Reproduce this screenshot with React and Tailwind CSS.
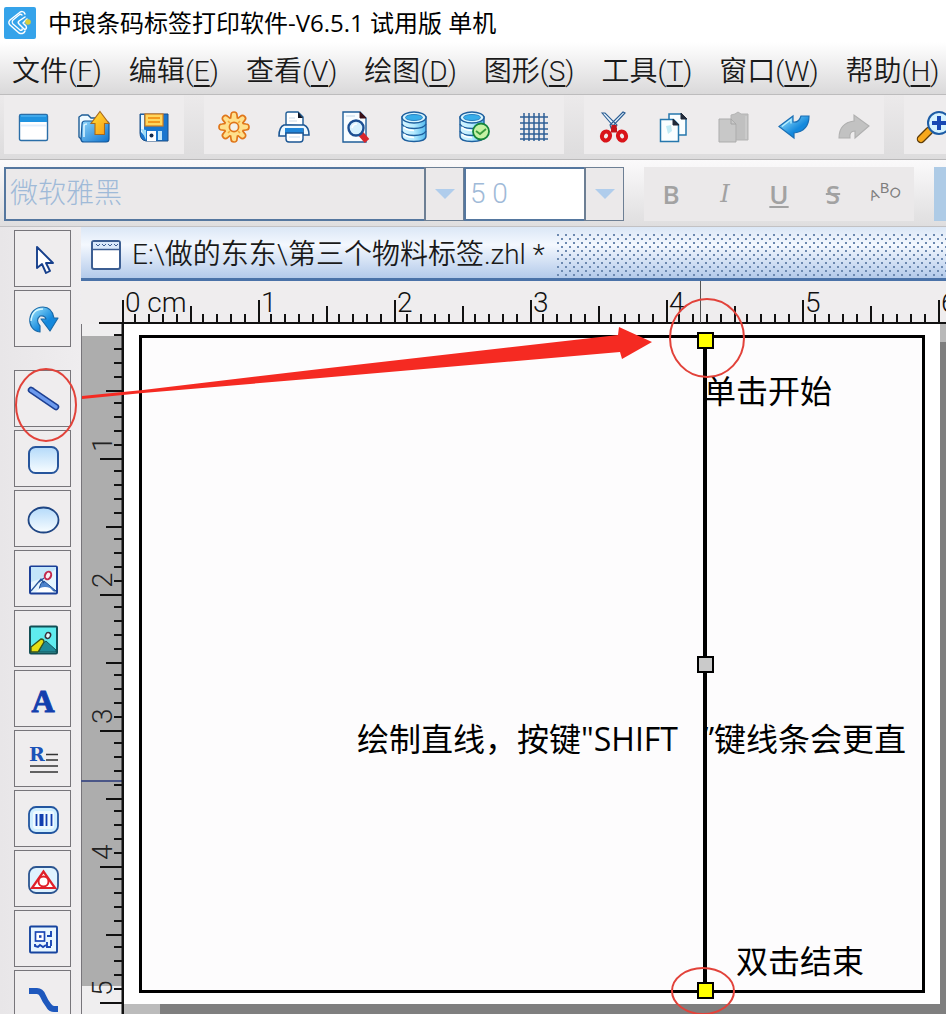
import React from "react";

const LATIN_CJK = "font-['Open_Sans','Noto_Sans_CJK_SC',sans-serif]";
const THIN_CJK = "font-['Roboto','Noto_Sans_CJK_SC',sans-serif]";

function Icon({ children, className = "size-8" }) {
  return (
    <svg viewBox="0 0 32 32" className={className + " shrink-0 overflow-visible"} fill="none" aria-hidden="true">
      {children}
    </svg>
  );
}

function Gradients() {
  return (
    <svg className="absolute size-0" aria-hidden="true">
      <defs>
        <linearGradient id="folder" x1="0" y1="0" x2="1" y2="1">
          <stop offset="0" stopColor="#8fd6fb" />
          <stop offset="1" stopColor="#0f72cc" />
        </linearGradient>
        <linearGradient id="gold" x1="0" y1="0" x2="1" y2="1">
          <stop offset="0" stopColor="#ffe03a" />
          <stop offset="1" stopColor="#fb9a12" />
        </linearGradient>
        <linearGradient id="sky" x1="0" y1="0" x2="0" y2="1">
          <stop offset="0" stopColor="#b4dafa" />
          <stop offset="1" stopColor="#f8fdff" />
        </linearGradient>
        <linearGradient id="drum" x1="0" y1="0" x2="1" y2="0">
          <stop offset="0" stopColor="#d8f6ff" />
          <stop offset="0.5" stopColor="#b6ebff" />
          <stop offset="1" stopColor="#4fb8ee" />
        </linearGradient>
        <linearGradient id="turn" x1="0" y1="0" x2="1" y2="1">
          <stop offset="0" stopColor="#a8ecff" />
          <stop offset="0.6" stopColor="#1489dd" />
        </linearGradient>
      </defs>
    </svg>
  );
}

const Logo = () => (
  <Icon>
    <rect width="32" height="32" rx="2" fill="#35a3ea" />
    <g stroke="#fff" strokeLinecap="round" strokeLinejoin="round">
      <path d="M21 7c-1-3-4-3-6-1L6 13c-2 2-1 4 0 5l9 8c2 1 5 1 6-2" strokeWidth="1.500" />
      <path d="M18 8c-1-1-2-1-3 0l-6 5c-1 1-1 3 0 4l7 6c1 1 3 0 2-1" strokeWidth="1.300" />
      <path d="M21 10l-6 4c-1 1-1 2 0 3l5 5c2 1 3-1 2-3l-3-3 4-4" strokeWidth="1.500" />
    </g>
    <circle cx="24" cy="15" r="2.800" fill="#d9cf3c" />
  </Icon>
);

const NewIcon = () => (
  <Icon>
    <rect x="1.5" y="3.5" width="28" height="26" rx="1.5" fill="#fff" stroke="#2a6ea8" strokeWidth="1.4" />
    <rect x="2" y="4" width="27" height="7" fill="#1f93e0" />
    <path d="M3 5h25" stroke="#58b8f0" strokeWidth="1.2" />
    <path d="M3 14.5h25" stroke="#e2eefc" strokeWidth="2" />
  </Icon>
);
const OpenIcon = () => (
  <Icon>
    <path d="M1 26V6l3-2h6l3 3h10v16H6l-2 6z" fill="#effaff" stroke="#1d5c96" strokeWidth="1.4" />
    <path d="M4 13q0-3 3-3h20q4 0 4 3v15q0 3-3 3H6q-3 0-3-3z" fill="url(#folder)" stroke="#14589c" strokeWidth="1.2" />
    <path d="M6 26V15q0-2 3-2" stroke="#d8f3ff" strokeWidth="1.6" />
    <path d="M22 .5l9 12h-4.500v11H17v-11h-4z" fill="url(#gold)" stroke="#a8691d" strokeWidth="1.1" />
  </Icon>
);
const SaveIcon = () => (
  <Icon>
    <path d="M2 3h28v27H8q-6-1-6-8z" fill="#1976cf" stroke="#1c4f86" />
    <path d="M3 4h3v20l-3-3z" fill="#e8f6ff" />
    <rect x="7" y="3" width="18" height="12" fill="#ffd75e" stroke="#d27a1c" strokeWidth="1.2" />
    <path d="M10 7h12M10 11h12" stroke="#f49a1c" strokeWidth="1.8" />
    <path d="M3 18l5 11V19z" fill="#9ddcf8" />
    <path d="M9 20h9v10H9z" fill="#fff" />
    <path d="M20 20h4v9h-4z" fill="#bfe6fb" />
    <circle cx="13.500" cy="24.500" r="2" fill="#10294d" />
  </Icon>
);
const GearIcon = () => (
  <Icon>
    <g fill="#ffe08c" stroke="#e0761a" strokeWidth="1.7">
      {[0, 45, 90, 135, 180, 225, 270, 315].map((a) => (
        <path key={a} d="M12.500 8l.5-4q0-3 3-3t3 3l.5 4" transform={`rotate(${a} 16 16)`} />
      ))}
      <circle cx="16" cy="16" r="9" stroke="none" />
      <circle cx="16" cy="16" r="4.600" fill="#f3f0ea" />
      <path d="M10 10l2 2M22 10l-2 2M10 22l2-2M22 22l-2-2" stroke="#f5a93c" />
    </g>
  </Icon>
);
const PrintIcon = () => (
  <Icon>
    <path d="M8 14V3q0-2 2-2h10l5 5v9z" fill="#fff" stroke="#1d5c96" strokeWidth="1.4" />
    <path d="M20 1v6h5z" fill="#111827" />
    <path d="M11 7h6M11 10h8" stroke="#cddbe8" />
    <path d="M6 14h20q5 2 5 10h-6V18H8v7H1q0-9 5-11z" fill="#eef9ff" stroke="#1b5694" strokeWidth="1.6" />
    <rect x="7" y="17" width="18" height="6" fill="#1f86da" />
    <path d="M8 22h17v6q0 3-3 3H11q-3 0-3-3z" fill="#fff" stroke="#1b5694" strokeWidth="1.4" />
    <path d="M11 26h11" stroke="#d7e7f4" strokeWidth="1.4" />
  </Icon>
);
const PreviewIcon = () => (
  <Icon>
    <path d="M5 1h17l6 6v24H5z" fill="#f8fdff" stroke="#1f5d99" strokeWidth="1.4" />
    <path d="M22 1v6h6z" fill="#3a1018" stroke="#3a1018" />
    <path d="M8 5h9" stroke="#c9dcec" strokeWidth="1.2" />
    <path d="M23 23l6 7" stroke="#d8262c" strokeWidth="6" />
    <circle cx="18" cy="17" r="7.500" fill="#d7f2ff" stroke="#1c4f93" strokeWidth="2.400" />
    <path d="M14 17q1-4 5-4" stroke="#fff" strokeWidth="1.600" />
  </Icon>
);
const Drum = () => (
  <g stroke="#1e5f9e" strokeWidth="1.400">
    <path d="M4 6v19q0 5.500 12 5.500T28 25V6z" fill="url(#drum)" />
    <ellipse cx="16" cy="6.500" rx="12" ry="5.500" fill="#d9f6ff" />
    <ellipse cx="16" cy="6.500" rx="8.500" ry="3" fill="#38aeea" stroke="#2a83c4" strokeWidth="1" />
    <path d="M4 13q2 4.500 12 4.500T28 13M4 20q2 4.500 12 4.500T28 20" />
    <path d="M6 16q3 3.500 10 3.500M6 23q3 3.500 10 3.500" stroke="#fff" strokeWidth="1.600" />
  </g>
);
const DbIcon = () => (
  <Icon>
    <Drum />
  </Icon>
);
const DbCheckIcon = () => (
  <Icon>
    <g transform="translate(-2)">
      <Drum />
    </g>
    <circle cx="23" cy="20.500" r="8" fill="#c6f2a4" stroke="#15853b" strokeWidth="1.800" />
    <path d="M18 20l4 3 6-5" stroke="#3a9b3e" strokeWidth="1.800" />
  </Icon>
);
const GridIcon = () => (
  <Icon>
    <path d="M6 2v28M11 2v28M16 2v28M21 2v28M26 2v28M2 6h28M2 12h28M2 18h28M2 23h28M2 28h28" stroke="#2f5f96" strokeWidth="1.500" />
  </Icon>
);
const CutIcon = () => (
  <Icon>
    <path d="M4 2l13 15 2-3L7 2zM27 2L13 17l-1-3L25 1z" fill="#eaf6ff" stroke="#2a5d93" strokeWidth="1.100" />
    <path d="M16 14v5M13 19h6" stroke="#c3141a" strokeWidth="5" />
    <ellipse cx="8" cy="25" rx="4" ry="4.500" transform="rotate(25 8 25)" stroke="#d9141a" strokeWidth="4" />
    <ellipse cx="24" cy="25" rx="4" ry="4.500" transform="rotate(-25 24 25)" stroke="#d9141a" strokeWidth="4" />
  </Icon>
);
const CopyIcon = () => (
  <Icon>
    <g stroke="#2677ad" strokeWidth="1.500" fill="#fafeff">
      <path d="M11 3h12l5 5v16H11z" />
      <path d="M23 2v6h6z" fill="#222b3a" stroke="#222b3a" strokeWidth="1" />
      <path d="M2.500 8.500h13l5 5v17h-18z" />
      <path d="M15 8v6h6z" fill="#222b3a" stroke="#222b3a" strokeWidth="1" />
    </g>
    <path d="M8 15l5-1 1 6-4 3z" fill="#c3ebf5" />
  </Icon>
);
const PasteIcon = () => (
  <Icon>
    <path d="M13 4l4-1 3-2 3 2h7v26H13z" fill="#c0c0c0" stroke="#b4b4b4" />
    <path d="M1 8h12l5 5v18H1z" fill="#c8c8c8" stroke="#adadad" />
    <path d="M13 8v5h5" stroke="#a4a4a4" />
    <path d="M28 5v23" stroke="#d5d5d5" />
  </Icon>
);
const UndoIcon = () => (
  <Icon>
    <path d="M1 15.500L15 5v6q6 1 8-6h8q0 15-15 17v5z" fill="url(#turn)" stroke="#1a6fb5" strokeWidth="1.200" />
    <path d="M4 15.500l9-7v4" stroke="#b9f0ff" strokeWidth="1.300" />
  </Icon>
);
const RedoIcon = () => (
  <Icon>
    <path d="M31 15L16 4v6Q1 12 1 27h11q-1-7 5-7v7z" fill="#c2c2c2" stroke="#b0b0b0" strokeWidth="1.100" />
  </Icon>
);
const ZoomIcon = () => (
  <Icon>
    <path d="M3 28l8-8" stroke="#5b3a08" strokeWidth="8.500" strokeLinecap="round" />
    <path d="M3 28l8-8" stroke="#f7a81c" strokeWidth="6" strokeLinecap="round" />
    <circle cx="21" cy="12" r="11" fill="#d5f2ff" stroke="#1c5ca6" strokeWidth="2" />
    <path d="M21 5v14M14 12h14" stroke="#1748b4" strokeWidth="4" />
  </Icon>
);

const CursorIcon = () => (
  <Icon>
    <path d="M10 3v21l5-4 4 9 4-2-4-8h7z" fill="#fff" stroke="#17408c" strokeWidth="1.900" strokeLinejoin="round" />
  </Icon>
);
const RotateIcon = () => (
  <Icon>
    <path d="M13 28C-2 26 0 3 16 3q9 0 11 11h4l-8 13-9-12h5q-1-4-6-3-5 4 0 10z" fill="url(#turn)" stroke="#1b6aa8" strokeWidth="1.200" strokeLinejoin="round" />
    <path d="M4 17Q5 5 16 5" stroke="#d6f8ff" strokeWidth="1.400" />
  </Icon>
);
const LineIcon = () => (
  <Icon>
    <path d="M4 6l25 17" stroke="#1c3f92" strokeWidth="6.500" strokeLinecap="round" />
    <path d="M4 6l25 17" stroke="#6c9aee" strokeWidth="3.400" strokeLinecap="round" />
  </Icon>
);
const RoundRectIcon = () => (
  <Icon>
    <rect x="2" y="3" width="29" height="26" rx="6.500" fill="url(#sky)" stroke="#26559c" strokeWidth="2" />
  </Icon>
);
const EllipseIcon = () => (
  <Icon>
    <ellipse cx="16.500" cy="16" rx="15" ry="12.500" fill="url(#sky)" stroke="#1f4684" strokeWidth="1.800" />
  </Icon>
);
const PictureIcon = () => (
  <Icon>
    <rect x="3" y="2.500" width="27" height="27" rx="1" fill="#e6f6ff" stroke="#1b3f97" strokeWidth="2" />
    <path d="M4 18Q16 15 29 5V3H4z" fill="#c4e6fa" />
    <path d="M12 27q1-9 5-10l12 10z" fill="#4d83cc" stroke="#1d4c95" />
    <path d="M13 24q5-2 10 0l4 4H9z" fill="#fff" />
    <path d="M4 27l10-12 3 4M12 18l5-4" stroke="#25549b" strokeWidth="1.300" />
    <ellipse cx="21" cy="11.500" rx="3" ry="4" transform="rotate(25 21 11.500)" fill="#f9eef2" stroke="#c3284c" strokeWidth="2" />
  </Icon>
);
const PhotoIcon = () => (
  <Icon>
    <rect x="3" y="2.500" width="27" height="27" rx="1" fill="#5fecee" stroke="#134f55" strokeWidth="2" />
    <path d="M12 28q3-9 7-11l10 9v2z" fill="#1f8a98" stroke="#14545b" />
    <path d="M4 28v-5l10-8q3 0 3 3l-6 10z" fill="#e6df14" stroke="#39521c" strokeWidth="1.300" />
    <ellipse cx="21" cy="11.500" rx="2.500" ry="3" transform="rotate(25 21 11.500)" fill="#eafcff" stroke="#38313c" strokeWidth="1.500" />
  </Icon>
);
const RichTextIcon = () => (
  <Icon>
    <path d="M19 10.500h12M19 16h12M3 22h28M3 28h28" stroke="#333" strokeWidth="1.600" />
    <text x="2" y="17" fontSize="19" fontWeight="700" fill="#1b53b8" className="font-['DejaVu_Serif',serif]">
      R
    </text>
  </Icon>
);
const BarcodeIcon = () => (
  <Icon>
    <rect x="2" y="3" width="29" height="26" rx="7" fill="#cfeeff" stroke="#22559f" strokeWidth="1.800" />
    <rect x="6" y="7" width="21" height="18" rx="3" fill="#eefaff" />
    <path d="M9.500 10v12M19.500 10v12M24.500 10v12" stroke="#123fb0" strokeWidth="1.800" />
    <path d="M14.500 10v12" stroke="#123fb0" strokeWidth="4" />
  </Icon>
);
const TriangleIcon = () => (
  <Icon>
    <rect x="2" y="3" width="29" height="26" rx="7" fill="#dff3ff" stroke="#2c5590" strokeWidth="1.800" />
    <path d="M16.500 7.500L5 24h23z" fill="#fff" stroke="#e0202a" strokeWidth="2.200" />
    <circle cx="16.500" cy="17.500" r="5" fill="#fff" stroke="#e0202a" strokeWidth="2" />
  </Icon>
);
const QrIcon = () => (
  <Icon>
    <rect x="3" y="2.500" width="27" height="26" rx="1" fill="#e9f7ff" stroke="#17459f" strokeWidth="1.900" />
    <rect x="8.500" y="8" width="9" height="9" fill="#fff" stroke="#1a47b4" strokeWidth="1.700" />
    <path d="M12 12.500h2.500" stroke="#1a47b4" strokeWidth="2.600" />
    <path d="M20 12h4V7M24 16v6M8 20v2l3 1 2-2 3 2 3-2M20 18v5h4" stroke="#1a47b4" strokeWidth="1.900" />
  </Icon>
);
const CurveIcon = () => (
  <Icon>
    <path d="M2 7h8q4 0 6 5t6 10q2 3 5 3h4" stroke="#1e58bd" strokeWidth="6" />
  </Icon>
);

const MENUS = [
  ["文件", "F"],
  ["编辑", "E"],
  ["查看", "V"],
  ["绘图", "D"],
  ["图形", "S"],
  ["工具", "T"],
  ["窗口", "W"],
  ["帮助", "H"],
];

const TOOL_GROUPS = [
  [["新建", NewIcon], ["打开", OpenIcon], ["保存", SaveIcon]],
  [["设置", GearIcon], ["打印", PrintIcon], ["打印预览", PreviewIcon], ["数据库", DbIcon], ["数据库连接", DbCheckIcon], ["网格", GridIcon]],
  [["剪切", CutIcon], ["复制", CopyIcon], ["粘贴", PasteIcon], ["撤销", UndoIcon], ["重做", RedoIcon]],
  [["放大", ZoomIcon]],
];

function ToolButton({ label, children, className }) {
  return (
    <button type="button" aria-label={label} className={"flex shrink-0 items-center justify-center " + className}>
      {children}
    </button>
  );
}

function Toolbar() {
  return (
    <div className="flex h-[65px] shrink-0 gap-5 overflow-hidden border-b border-[#b9b8b9] bg-linear-to-b from-[#eceaeb] to-[#dddcdd] pl-1">
      {TOOL_GROUPS.map((group, i) => (
        <div key={i} className="flex h-[59px] shrink-0 bg-[#eeeced] pt-1">
          {group.map(([label, Glyph]) => (
            <ToolButton key={label} label={label} className="w-[60px]">
              <Glyph />
            </ToolButton>
          ))}
        </div>
      ))}
    </div>
  );
}

function Dropdown({ label, value, className, selectClass }) {
  return (
    <div className={"relative h-full shrink-0 " + className}>
      <select
        aria-label={label}
        className={"size-full appearance-none border-2 border-[#55779f] pl-1 text-[28px] font-light text-[#9fbad8] " + THIN_CJK + " " + selectClass}
      >
        <option>{value}</option>
      </select>
      <span className="pointer-events-none absolute inset-y-0 right-0 flex w-10 items-center justify-center border border-l-2 border-[#6d7f94] bg-[#ebe9ea]">
        <svg viewBox="0 0 20 10" className="h-[10px] w-5" aria-hidden="true">
          <path d="M0 0h20L10 10z" fill="#b0cdec" />
        </svg>
      </span>
    </div>
  );
}

function FormatBar() {
  const cell = "h-full w-[54px] text-[#a2a2a2]";
  return (
    <div className="flex h-[67px] shrink-0 items-center overflow-hidden border-b border-[#c2c1c3] bg-linear-to-b from-[#fbfafb] to-[#dfdedf] pt-1 pb-[2px] pl-1">
      <div className="flex h-[54px] shrink-0">
        <Dropdown label="字体" value="微软雅黑" className="w-[460px]" selectClass="bg-[#ebe9ea]" />
        <Dropdown label="字号" value="5 0" className="w-40" selectClass="bg-white" />
      </div>
      <div className="ml-5 flex h-[54px] shrink-0 bg-[#ebe9ea]">
        <ToolButton label="加粗" className={cell}>
          <span className="font-['Open_Sans',sans-serif] text-[26px] font-semibold">B</span>
        </ToolButton>
        <ToolButton label="斜体" className={cell}>
          <span className="font-['DejaVu_Serif',serif] text-2xl italic">I</span>
        </ToolButton>
        <ToolButton label="下划线" className={cell}>
          <span className="font-['Open_Sans',sans-serif] text-[26px] font-semibold underline">U</span>
        </ToolButton>
        <ToolButton label="删除线" className={cell}>
          <span className="font-['Open_Sans',sans-serif] text-[26px] font-semibold line-through">S</span>
        </ToolButton>
        <ToolButton label="弧形文字" className={cell}>
          <svg viewBox="0 0 32 24" className="h-6 w-8 overflow-visible" fill="#7d7d7d" fontSize="14" aria-hidden="true">
            <g className="font-['Liberation_Sans',sans-serif]">
              <text x="0" y="17" transform="rotate(-20 6 17)">A</text>
              <text x="9" y="11">B</text>
              <text x="17" y="14" transform="rotate(25 20 14)">O</text>
            </g>
          </svg>
        </ToolButton>
      </div>
      <div className="ml-5 h-[54px] flex-1 bg-[#aecbe6]" />
    </div>
  );
}

const SIDE_TOOLS = [
  [["选择", CursorIcon], ["旋转", RotateIcon]],
  [
    ["直线", LineIcon],
    ["圆角矩形", RoundRectIcon],
    ["椭圆", EllipseIcon],
    ["矢量图", PictureIcon],
    ["图片", PhotoIcon],
    ["文本", null],
    ["富文本", RichTextIcon],
    ["条形码", BarcodeIcon],
    ["图形码", TriangleIcon],
    ["二维码", QrIcon],
    ["曲线", CurveIcon],
  ],
];

function Sidebar() {
  return (
    <aside className="flex w-[81px] shrink-0 flex-col gap-[23px] bg-linear-to-r from-[#e8e6e8] to-[#efedef] pt-[3px] pl-[14px]">
      {SIDE_TOOLS.map((group, i) => (
        <div key={i} className="flex flex-col gap-[3px]">
          {group.map(([label, Glyph]) => (
            <ToolButton key={label} label={label} className="size-[57px] border border-[#77757a] bg-[#efedee] pt-[2px]">
              {Glyph ? (
                <Glyph />
              ) : (
                <svg viewBox="0 0 32 32" className="size-8" aria-hidden="true">
                  <text x="16" y="28" textAnchor="middle" fontSize="32" fontWeight="700" fill="#123fae" stroke="#123fae" className="font-['Liberation_Serif',serif]">
                    A
                  </text>
                </svg>
              )}
            </ToolButton>
          ))}
        </div>
      ))}
    </aside>
  );
}

function DocumentTab() {
  return (
    <div className="flex h-[54px] shrink-0 items-center border-b-[3px] border-[#4a72a8] bg-linear-to-b from-[#dbe7f6] via-[#f4f8fe] via-35% to-[#b3caea] pt-1 pl-[9px]">
      <svg viewBox="0 0 32 32" className="size-8 shrink-0" aria-hidden="true">
        <rect x="2" y="2" width="28" height="28" rx="2" fill="#fff" stroke="#3c5e92" strokeWidth="2" />
        <path d="M3 3h26v7H3z" fill="#d9e9fb" />
        <path d="M2 10.500h28" stroke="#3c5e92" strokeWidth="1.500" />
        <path d="M6 5l2 2 2-2M12 5l2 2 2-2M18 5l2 2 2-2M24 5l2 2 2-2" fill="none" stroke="#3c5e92" />
      </svg>
      <span className={"ml-[10px] w-[412px] shrink-0 text-[28px] leading-none font-[350] whitespace-pre text-[#1a1a1a] " + THIN_CJK}>
        E:\做的东东\第三个物料标签.zhl *
      </span>
      <div className="ml-3 h-11 flex-1 bg-[radial-gradient(circle_at_2px_2px,#6c89b0_1px,transparent_1.5px),radial-gradient(circle_at_6px_6px,#6c89b0_1px,transparent_1.5px)] bg-size-[8px_8px]" />
    </div>
  );
}

const CM = 136;
const OFFSETS = [0, 12, 26, 40, 54, 68, 80, 94, 108, 122];
const TICKS = Array.from({ length: 7 }, (_, cm) =>
  OFFSETS.map((o, i) => ({ at: cm * CM + o, size: i === 0 ? 23 : i === 5 ? 17 : 9 }))
).flat();
const RULER_TEXT = "font-['Roboto',sans-serif] text-[28px] font-light";

function TopRuler() {
  return (
    <svg className="h-[43px] w-full overflow-hidden" aria-label="水平标尺">
      <g stroke="#111" strokeWidth="2">
        <path d="M18 42H2000" />
        {TICKS.map((t) => (
          <path key={t.at} d={`M${t.at + 42} 42v${-t.size}`} />
        ))}
      </g>
      <path d="M619.500 0v42" stroke="#555" />
      <g className={RULER_TEXT} fill="#111">
        <text x="44" y="31">0 cm</text>
        {[1, 2, 3, 4, 5, 6].map((n) => (
          <text key={n} x={44 + n * CM} y="31">
            {n}
          </text>
        ))}
      </g>
    </svg>
  );
}

function LeftRuler() {
  return (
    <svg className="h-full w-[43px] overflow-hidden bg-[#efeeef]" aria-label="垂直标尺">
      <path d="M0 12h42v650H0z" fill="#adadad" />
      <path d="M.5 0v800" stroke="#77757a" />
      <path d="M0 457h42" stroke="#4a5687" strokeWidth="2" />
      <g stroke="#111" strokeWidth="2">
        <path d="M42 0v800" strokeWidth="3" />
        {TICKS.slice(1).map((t) => (
          <path key={t.at} d={`M42 ${t.at - 1}h${-t.size}`} />
        ))}
      </g>
      <g className={RULER_TEXT} fill="#222">
        {[1, 2, 3, 4, 5].map((n) => (
          <text key={n} transform={`translate(31 ${n * CM - 8}) rotate(-90)`}>
            {n}
          </text>
        ))}
      </g>
    </svg>
  );
}

function Note({ className, children }) {
  return (
    <p className={"absolute text-[32px] leading-10 whitespace-pre text-black " + LATIN_CJK + " " + className}>{children}</p>
  );
}

function Handle({ className }) {
  return <span className={"absolute size-[17px] border-2 border-black " + className} />;
}

function Canvas() {
  return (
    <div className="relative flex-1 overflow-hidden bg-[#7f7f7f]">
      <div className="absolute top-0 right-0 h-[18px] w-[6px] bg-[#b9b9b9]" />
      <div className="absolute bottom-0 left-0 h-[10px] w-9 bg-[#bcbcbc]" />
      <div className="absolute top-0 right-[6px] bottom-[10px] left-0 bg-white">
        <div className="absolute top-[11px] right-[15px] bottom-[11px] left-[15px] border-[3px] border-black bg-[#fdfcfd]" />
        <div className="absolute top-3 bottom-3 left-[579px] w-1 bg-black" />
        <Note className="top-[47px] left-[580px]">单击开始</Note>
        <Note className="top-[395px] left-[233px]">绘制直线，按键"SHIFT   ”键线条会更直</Note>
        <Note className="top-[617px] left-[612px]">双击结束</Note>
        <Handle className="top-2 left-[573px] bg-[#ffff00]" />
        <Handle className="top-[332px] left-[573px] bg-[#cacaca]" />
        <Handle className="bottom-[5px] left-[573px] bg-[#ffff00]" />
      </div>
    </div>
  );
}

function Annotations() {
  return (
    <svg className="pointer-events-none absolute inset-0 size-full" aria-hidden="true">
      <path d="M82 169l61-6 177-21 298-34 1-8 33 15-30 17-2-7-300 26-177 15-61 6z" fill="#f52a22" />
      <g fill="none" stroke="#e2423a" strokeWidth="2">
        <ellipse cx="46" cy="178" rx="30" ry="36" />
        <ellipse cx="707" cy="111" rx="37" ry="39" />
        <ellipse cx="703" cy="764" rx="31" ry="23" />
      </g>
    </svg>
  );
}

export default function App() {
  return (
    <div className="flex h-screen flex-col overflow-hidden bg-[#efedee]">
      <Gradients />
      <div className="flex h-[95px] shrink-0 flex-col border-b border-[#bdbcbd] bg-linear-to-b from-white from-45% to-[#dad9da]">
        <header className="flex h-[46px] shrink-0 items-center gap-3 pl-1">
          <Logo />
          <h1 className={"text-2xl leading-none whitespace-nowrap text-black " + LATIN_CJK}>中琅条码标签打印软件-V6.5.1 试用版 单机</h1>
        </header>
        <nav className={"flex flex-1 items-center gap-[27px] overflow-hidden pt-1 pl-3 text-[28px] font-[350] text-[#1a1a1a] " + THIN_CJK}>
          {MENUS.map(([name, key]) => (
            <button key={key} type="button" className="shrink-0 leading-none whitespace-nowrap">
              {name}(<span className="underline decoration-2 underline-offset-4">{key}</span>)
            </button>
          ))}
        </nav>
      </div>
      <Toolbar />
      <FormatBar />
      <main className="relative flex min-h-0 flex-1">
        <Sidebar />
        <section className="flex min-w-0 flex-1 flex-col">
          <DocumentTab />
          <TopRuler />
          <div className="flex min-h-0 flex-1">
            <LeftRuler />
            <Canvas />
          </div>
        </section>
        <Annotations />
      </main>
    </div>
  );
}
